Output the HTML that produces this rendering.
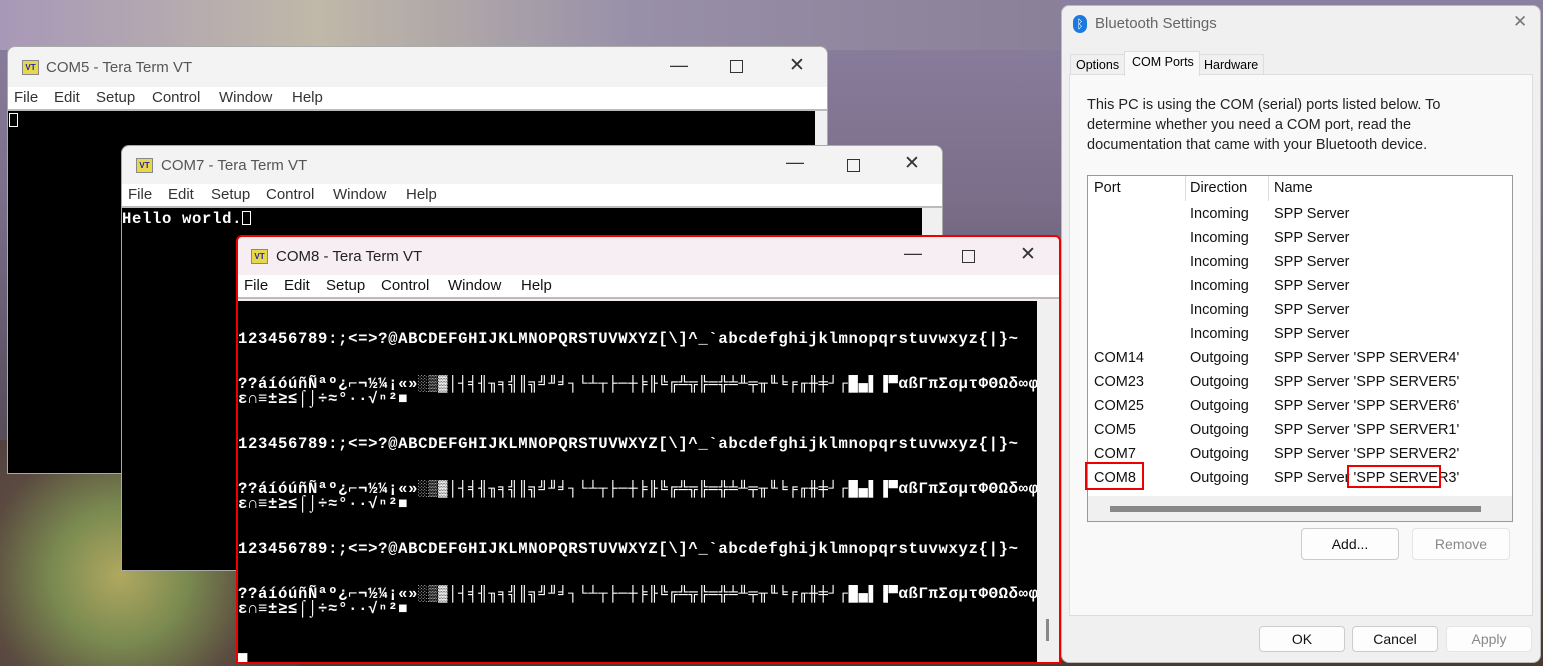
<!DOCTYPE html>
<html><head><meta charset="utf-8"><style>
*{margin:0;padding:0;box-sizing:border-box}
body{width:1543px;height:666px;position:relative;overflow:hidden;font-family:"Segoe UI","Liberation Sans",sans-serif;
background:linear-gradient(180deg,#8c80a0 0%,#7a6e8a 30%,#5a5060 60%,#4a3a30 100%);}
.bgl{position:absolute;left:0;top:440px;width:300px;height:226px;background:radial-gradient(circle at 40% 60%,#b0a860 0%,#7a8a50 30%,#5a4a40 60%,#4a3a40 100%)}
.bgt{position:absolute;left:0;top:0;width:1060px;height:50px;background:linear-gradient(90deg,#a898b8,#c0b8a8 30%,#9890a8 60%,#8a8098)}
.win{position:absolute;background:#f3f3f3;border:1px solid #aaa;border-radius:8px 8px 0 0;overflow:hidden}
.tt{position:absolute;left:0;right:0;top:0;font-size:15px;color:#555}
.tt .ic{position:absolute;width:17px;height:15px;background:#e6d84a;border:1px solid #888;font:bold 8px "Liberation Sans";color:#22a;text-align:center;line-height:13px}
.tt .t{position:absolute}
.menu{position:absolute;left:0;right:0;background:#fff;font-size:15px;color:#333;height:24px;line-height:22px;border-bottom:2px solid #bbb}
.menu span{position:absolute;top:0}
.term{position:absolute;background:#000;color:#fff;font:bold 15.6px/15px "Liberation Mono",monospace;white-space:pre;overflow:hidden;letter-spacing:0.65px}
.ctl{position:absolute;font-size:18px;color:#333}
.sb{position:absolute;background:#f0f0f0}
.bt{position:absolute;font-size:14.5px;color:#111}
.row{position:absolute;font-size:14.5px;color:#111}
.btn{position:absolute;border:1px solid #ccc;background:#fdfdfd;border-radius:4px;font-size:14px;text-align:center;color:#111}
</style></head><body>
<div class="bgt"></div><div class="bgl"></div>

<!-- COM5 -->
<div class="win" style="left:7px;top:46px;width:821px;height:428px">
 <div class="tt" style="height:40px"><div class="ic" style="left:14px;top:13px">VT</div><div class="t" style="left:38px;top:12px">COM5 - Tera Term VT</div>
 <div class="ctl" style="left:662px;top:8px">—</div><div class="ctl" style="left:722px;top:13px;width:13px;height:13px;border:1.5px solid #333"></div><div class="ctl" style="left:781px;top:7px;font-size:19px">✕</div></div>
 <div class="menu" style="top:40px"><span style="left:6px">File</span><span style="left:46px">Edit</span><span style="left:88px">Setup</span><span style="left:144px">Control</span><span style="left:211px">Window</span><span style="left:284px">Help</span></div>
 <div class="term" style="left:0;top:64px;width:807px;height:364px"><span style="display:inline-block;width:9px;height:14px;border:1px solid #fff;margin:2px 0 0 1px"></span></div>
 <div class="sb" style="left:807px;top:64px;width:14px;height:364px"></div>
</div>

<!-- COM7 -->
<div class="win" style="left:121px;top:145px;width:822px;height:426px">
 <div class="tt" style="height:38px"><div class="ic" style="left:14px;top:12px">VT</div><div class="t" style="left:39px;top:11px">COM7 - Tera Term VT</div>
 <div class="ctl" style="left:664px;top:6px">—</div><div class="ctl" style="left:725px;top:13px;width:13px;height:13px;border:1.5px solid #333"></div><div class="ctl" style="left:782px;top:6px;font-size:19px">✕</div></div>
 <div class="menu" style="top:38px"><span style="left:6px">File</span><span style="left:46px">Edit</span><span style="left:89px">Setup</span><span style="left:144px">Control</span><span style="left:211px">Window</span><span style="left:284px">Help</span></div>
 <div class="term" style="left:0;top:62px;width:800px;height:364px;padding-top:3px">Hello world.<span style="display:inline-block;width:9px;height:14px;border:1px solid #fff;vertical-align:-2px"></span></div>
 <div class="sb" style="left:800px;top:62px;width:22px;height:364px"></div>
</div>

<!-- COM8 -->
<div class="win" style="left:236px;top:235px;width:825px;height:429px;border:2px solid #e00;border-radius:6px 6px 0 0;background:#f6eef2">
 <div class="tt" style="height:38px"><div class="ic" style="left:13px;top:12px">VT</div><div class="t" style="left:38px;top:11px;color:#222">COM8 - Tera Term VT</div>
 <div class="ctl" style="left:666px;top:6px">—</div><div class="ctl" style="left:724px;top:13px;width:13px;height:13px;border:1.5px solid #333"></div><div class="ctl" style="left:782px;top:6px;font-size:19px">✕</div></div>
 <div class="menu" style="top:38px;color:#111"><span style="left:6px">File</span><span style="left:46px">Edit</span><span style="left:88px">Setup</span><span style="left:143px">Control</span><span style="left:210px">Window</span><span style="left:283px">Help</span></div>
 <div class="term" style="left:0;top:64px;width:799px;height:361px;padding-top:31px">123456789:;&lt;=&gt;?@ABCDEFGHIJKLMNOPQRSTUVWXYZ[\]^_`abcdefghijklmnopqrstuvwxyz{|}~


??áíóúñÑªº¿⌐¬½¼¡«»░▒▓│┤╡╢╖╕╣║╗╝╜╛┐└┴┬├─┼╞╟╚╔╩╦╠═╬╧╨╤╥╙╘╒╓╫╪┘┌█▄▌▐▀αßΓπΣσµτΦΘΩδ∞φ
ε∩≡±≥≤⌠⌡÷≈°∙·√ⁿ²■


123456789:;&lt;=&gt;?@ABCDEFGHIJKLMNOPQRSTUVWXYZ[\]^_`abcdefghijklmnopqrstuvwxyz{|}~


??áíóúñÑªº¿⌐¬½¼¡«»░▒▓│┤╡╢╖╕╣║╗╝╜╛┐└┴┬├─┼╞╟╚╔╩╦╠═╬╧╨╤╥╙╘╒╓╫╪┘┌█▄▌▐▀αßΓπΣσµτΦΘΩδ∞φ
ε∩≡±≥≤⌠⌡÷≈°∙·√ⁿ²■


123456789:;&lt;=&gt;?@ABCDEFGHIJKLMNOPQRSTUVWXYZ[\]^_`abcdefghijklmnopqrstuvwxyz{|}~


??áíóúñÑªº¿⌐¬½¼¡«»░▒▓│┤╡╢╖╕╣║╗╝╜╛┐└┴┬├─┼╞╟╚╔╩╦╠═╬╧╨╤╥╙╘╒╓╫╪┘┌█▄▌▐▀αßΓπΣσµτΦΘΩδ∞φ
ε∩≡±≥≤⌠⌡÷≈°∙·√ⁿ²■


▄</div>
 <div class="sb" style="left:799px;top:64px;width:22px;height:361px"><div style="position:absolute;left:9px;top:318px;width:3px;height:22px;background:#888"></div></div>
</div>

<!-- Bluetooth -->
<div style="position:absolute;left:1061px;top:5px;width:480px;height:658px;background:#f0f0f0;border:1px solid #bbb;border-radius:8px">
 <div style="position:absolute;left:11px;top:9px;width:14px;height:18px;border-radius:7px;background:#1a7ae0;color:#fff;font-size:12px;text-align:center;line-height:18px">ᛒ</div>
 <div style="position:absolute;left:33px;top:9px;font-size:15px;color:#666">Bluetooth Settings</div>
 <div style="position:absolute;left:451px;top:6px;font-size:17px;color:#777">✕</div>
 <div style="position:absolute;left:8px;top:48px;width:58px;height:21px;border:1px solid #ddd;border-bottom:none;font-size:12.5px;padding:3px 0 0 5px">Options</div>
 <div style="position:absolute;left:62px;top:45px;width:76px;height:25px;border:1px solid #ddd;border-bottom:none;background:#f9f9f9;font-size:12.5px;padding:3px 0 0 7px;z-index:2">COM Ports</div>
 <div style="position:absolute;left:137px;top:48px;width:65px;height:21px;border:1px solid #ddd;border-bottom:none;font-size:12.5px;padding:3px 0 0 4px">Hardware</div>
 <div style="position:absolute;left:7px;top:68px;width:464px;height:542px;background:#f9f9f9;border:1px solid #ddd">
  <div class="bt" style="left:17px;top:20px;line-height:20px;color:#222">This PC is using the COM (serial) ports listed below. To<br>determine whether you need a COM port, read the<br>documentation that came with your Bluetooth device.</div>
  <div style="position:absolute;left:17px;top:100px;width:426px;height:347px;background:#fff;border:1px solid #999">
   <div style="position:absolute;left:97px;top:0;width:1px;height:25px;background:#ddd"></div>
   <div style="position:absolute;left:180px;top:0;width:1px;height:25px;background:#ddd"></div>
   <div class="row" style="left:6px;top:4px">Port</div><div class="row" style="left:102px;top:4px">Direction</div><div class="row" style="left:186px;top:4px">Name</div>
   <div class="row" style="left:102px;top:26px;line-height:24px">Incoming<br>Incoming<br>Incoming<br>Incoming<br>Incoming<br>Incoming<br>Outgoing<br>Outgoing<br>Outgoing<br>Outgoing<br>Outgoing<br>Outgoing</div>
   <div class="row" style="left:186px;top:26px;line-height:24px;white-space:nowrap">SPP Server<br>SPP Server<br>SPP Server<br>SPP Server<br>SPP Server<br>SPP Server<br>SPP Server 'SPP SERVER4'<br>SPP Server 'SPP SERVER5'<br>SPP Server 'SPP SERVER6'<br>SPP Server 'SPP SERVER1'<br>SPP Server 'SPP SERVER2'<br>SPP Server 'SPP SERVER3'</div>
   <div class="row" style="left:6px;top:170px;line-height:24px">COM14<br>COM23<br>COM25<br>COM5<br>COM7<br>COM8</div>
   <div style="position:absolute;left:-3px;top:286px;width:59px;height:28px;border:2.5px solid #e00"></div>
   <div style="position:absolute;left:259px;top:289px;width:94px;height:23px;border:2.5px solid #e00"></div>
   <div style="position:absolute;left:0;top:320px;width:424px;height:25px;background:#f0f0f0"><div style="position:absolute;left:22px;top:10px;width:371px;height:6px;background:#888"></div></div>
  </div>
  <div class="btn" style="left:231px;top:453px;width:98px;height:32px;line-height:30px">Add...</div>
  <div class="btn" style="left:342px;top:453px;width:98px;height:32px;line-height:30px;color:#888;border-color:#e5e5e5">Remove</div>
 </div>
 <div class="btn" style="left:197px;top:620px;width:86px;height:26px;line-height:24px">OK</div>
 <div class="btn" style="left:290px;top:620px;width:86px;height:26px;line-height:24px">Cancel</div>
 <div class="btn" style="left:384px;top:620px;width:86px;height:26px;line-height:24px;color:#888;border-color:#e5e5e5">Apply</div>
</div>
</body></html>
